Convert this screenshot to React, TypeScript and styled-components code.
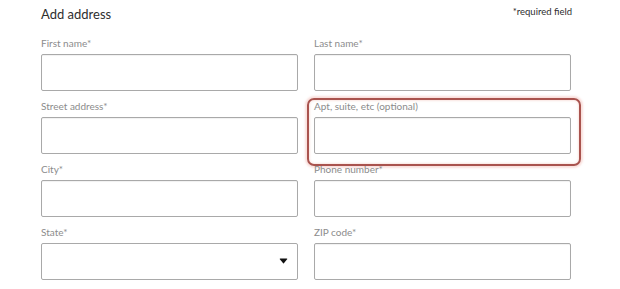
import React, { FC } from "react";
import styled, { createGlobalStyle } from "styled-components";

interface iField {
  id: string;
  label: string;
  select?: boolean;
  highlight?: boolean;
}

const fields: iField[] = [
  { id: "first", label: "First name*" },
  { id: "last", label: "Last name*" },
  { id: "street", label: "Street address*" },
  { id: "apt", label: "Apt, suite, etc (optional)", highlight: true },
  { id: "city", label: "City*" },
  { id: "phone", label: "Phone number*" },
  { id: "state", label: "State*", select: true },
  { id: "zip", label: "ZIP code*" },
];

const App: FC = () => {
  return (
    <>
      <GlobalStyle />
      <Page>
        <Header>
          <Title>Add address</Title>
          <Required>*required field</Required>
        </Header>

        <FormGrid>
          {fields.map((field) => (
            <Field key={field.id}>
              <Label htmlFor={`field-${field.id}`}>{field.label}</Label>
              {field.select ? (
                <SelectWrap>
                  <SelectBox id={`field-${field.id}`} defaultValue="">
                    <option value="" />
                  </SelectBox>
                  <Caret viewBox="0 0 10 7" aria-hidden="true">
                    <path d="M0.5 1.2 Q0.5 0.6 1.2 0.6 L8.8 0.6 Q9.5 0.6 9.5 1.2 L5.4 6.2 Q5 6.6 4.6 6.2 Z" />
                  </Caret>
                </SelectWrap>
              ) : (
                <TextInput id={`field-${field.id}`} type="text" />
              )}
              {field.highlight && <Highlight />}
            </Field>
          ))}
        </FormGrid>
      </Page>
    </>
  );
};

const GlobalStyle = createGlobalStyle`
  body {
    margin: 0;
    background: #ffffff;
    font-family: Lato, "Open Sans", sans-serif;
  }
`;

const Page = styled.main`
  width: 530px;
  padding: 6px 49px 0 41px;
`;

const Header = styled.header`
  display: flex;
  justify-content: space-between;
  align-items: flex-start;
  margin-bottom: 15px;
`;

const Title = styled.h1`
  margin: 0;
  font-size: 13px;
  line-height: 16px;
  font-weight: 400;
  color: #2e2e2e;
`;

const Required = styled.span`
  font-size: 9.5px;
  line-height: 12px;
  color: #2e2e2e;
  margin-right: -1px;
`;

const FormGrid = styled.section`
  display: grid;
  grid-template-columns: 257px 257px;
  column-gap: 16px;
  row-gap: 9px;
`;

const Field = styled.div`
  position: relative;
  display: flex;
  flex-direction: column;
`;

const Label = styled.label`
  font-size: 10px;
  line-height: 12px;
  color: #8c8c8c;
  margin-bottom: 5px;
`;

const TextInput = styled.input`
  box-sizing: border-box;
  height: 37px;
  width: 100%;
  margin: 0;
  border: 1px solid #a9a9a9;
  border-radius: 2px;
  background: #ffffff;
  box-shadow: inset 0 1px 1px rgba(0, 0, 0, 0.06);
  outline: none;
`;

const SelectWrap = styled.div`
  position: relative;
`;

const SelectBox = styled.select`
  box-sizing: border-box;
  display: block;
  height: 37px;
  width: 100%;
  margin: 0;
  border: 1px solid #a9a9a9;
  border-radius: 2px;
  background: #ffffff;
  appearance: none;
  outline: none;
`;

const Caret = styled.svg`
  position: absolute;
  right: 10px;
  top: 15px;
  width: 9px;
  height: 6px;
  fill: #111111;
  pointer-events: none;
`;

const Highlight = styled.div`
  position: absolute;
  top: -2px;
  left: -7px;
  right: -10px;
  bottom: -12px;
  border: 2px solid #a9534e;
  border-radius: 7px;
  box-shadow: 0 0 2px 2px rgba(236, 150, 140, 0.3),
    inset 0 0 2px 1px rgba(236, 150, 140, 0.25);
  pointer-events: none;
`;

export default App;
